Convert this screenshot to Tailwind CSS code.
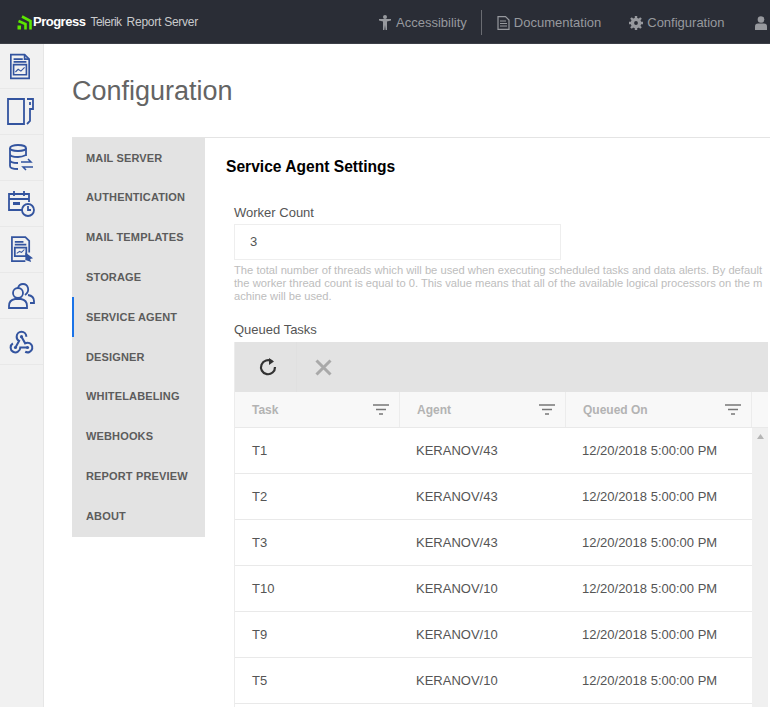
<!DOCTYPE html>
<html lang="en">
<head>
  <meta charset="UTF-8" />
  <title>Telerik Report Server - Configuration</title>
  <script src="https://cdn.jsdelivr.net/npm/@tailwindcss/browser@4"></script>
</head>
<body class="w-[770px] h-[707px] overflow-hidden bg-white font-['Liberation_Sans',Arial,sans-serif] text-[#5f5f5f]">

  <!-- top bar -->
  <header class="h-[44px] pt-[1px] bg-[#2a2d36] border-b border-[#3c3f47] flex items-center text-[#97999e] text-[13px] relative">
    <svg class="ml-[17px] w-[15px] h-[15px]" viewBox="0 0 15 15" fill="none" stroke="#5ce500" stroke-width="2.600"><path d="M5 1.500 13.500 6v8.500M1.500 6 8.500 9v5.500"/><path d="M.5 10.500h3.500v4H.5z" fill="#5ce500" stroke="none"/></svg>
    <span class="ml-[1px] text-white font-bold text-[13px] tracking-[-0.5px]">Progress</span>
    <span class="ml-[5px] text-[#c9cacc] text-[12px] tracking-[-0.5px]">Telerik</span>
    <span class="ml-[5px] text-[#c9cacc] text-[12px] tracking-[-0.25px]">Report Server</span>

    <nav class="absolute left-[379px] top-0 h-[45px] flex items-center whitespace-nowrap">
      <svg class="w-[12px] h-[15px]" viewBox="0 0 12 15" fill="#97999e"><circle cx="6" cy="2" r="2"/><path d="M0 4h12v1.500L8 6.500V15H6.600L6 10l-.6 5H4V6.500L0 5.500z"/></svg>
      <span class="ml-[5px]">Accessibility</span>
      <span class="ml-[14px] w-px h-[25px] bg-[#6a6c72]"></span>
      <svg class="ml-[15px] w-[13px] h-[14px]" viewBox="0 0 13 14" fill="none" stroke="#97999e" stroke-width="1.200"><path d="M1 .6h7.500L12 4v9.400H1zM3 5h6M3 7.500h7M3 10h7"/></svg>
      <span class="ml-[4px]">Documentation</span>
      <svg class="ml-[28px] w-[14px] h-[14px]" viewBox="0 0 14 14"><circle cx="7" cy="7" r="3.600" fill="none" stroke="#97999e" stroke-width="3.400"/><path stroke="#97999e" stroke-width="2.400" d="M7 0v3M7 11v3M0 7h3M11 7h3M2 2l2 2M10 10l2 2M12 2l-2 2M4 10l-2 2"/></svg>
      <span class="ml-[4px]">Configuration</span>
      <svg class="ml-[30px] w-[12px] h-[14px]" viewBox="0 0 12 14" fill="#97999e"><circle cx="6" cy="3.500" r="3.300"/><path d="M0 14v-3.500Q0 7.500 3 7.500h6q3 0 3 3V14z"/></svg>
    </nav>
  </header>

  <div class="flex h-[663px] overflow-hidden">
    <!-- icon rail -->
    <aside class="w-[44px] shrink-0 bg-[#f1f1f1] border-r border-[#e6e6e6]">
      <div class="h-[45px] border-b border-[#e8e8e8] flex items-center justify-center">
        <svg class="w-[22px] h-[27px] ml-[-3px]" viewBox="0 0 24 28" fill="none" stroke="#33549f" stroke-width="1.800"><path d="M2 1h15l5 5v21H2z"/><path d="M17 1v5h5M5 6h10M5 9h14"/><path d="M5 12h14v11H5z"/><path d="M7 20l3-3 3 2 4-4" stroke-width="1.200"/></svg>
      </div>
      <div class="h-[46px] border-b border-[#e8e8e8] flex items-center justify-center">
        <svg class="w-[28px] h-[27px] ml-[-1px]" viewBox="0 0 28 27" fill="none" stroke="#33549f" stroke-width="1.800"><path d="M1 1h16v25H1z"/><path d="M20 1h6v10h-3v12l-3 3"/><path d="M23 4v3" /></svg>
      </div>
      <div class="h-[46px] border-b border-[#e8e8e8] flex items-center justify-center">
        <svg class="w-[25px] h-[28px]" viewBox="0 0 25 28" fill="none" stroke="#33549f" stroke-width="1.800"><ellipse cx="9" cy="4" rx="8" ry="3"/><path d="M1 4v18c0 2 4 3 8 3M17 4v8M1 10c0 2 4 3 8 3s6-1 8-2M1 16c0 2 4 3 8 3"/><path d="M12 18h10l-3-3M24 23H14l3 3" stroke-width="1.500"/></svg>
      </div>
      <div class="h-[46px] border-b border-[#e8e8e8] flex items-center justify-center">
        <svg class="w-[27px] h-[27px]" viewBox="0 0 27 27" fill="none" stroke="#33549f" stroke-width="1.800"><path d="M14 20H1V4h20v8M1 9h20M6 1v5M16 1v5"/><path d="M5 12h7v3H5z" fill="#33549f" stroke="none"/><circle cx="20" cy="20" r="6"/><path d="M20 16v4h3"/></svg>
      </div>
      <div class="h-[46px] border-b border-[#e8e8e8] flex items-center justify-center">
        <svg class="w-[24px] h-[27px]" viewBox="0 0 25 28" fill="none" stroke="#33549f" stroke-width="1.800"><path d="M16 26H2V1h14l4 4v12"/><path d="M5 6h9M5 9h12"/><path d="M5 12h12v9H5z"/><path d="M7 18l3-2 2 1 3-3" stroke-width="1.100"/><path d="M16 17l8 6-3 1 1 3-6-2z" fill="#33549f" stroke="none"/></svg>
      </div>
      <div class="h-[46px] border-b border-[#e8e8e8] flex items-center justify-center">
        <svg class="w-[27px] h-[26px]" viewBox="0 0 27 26" fill="none" stroke="#33549f" stroke-width="1.800"><circle cx="10" cy="10" r="5"/><path d="M1 25v-2q0-6 6-7h6q6 1 6 7v2z"/><path d="M10 5q1-4 5-4t5 4-3 7"/><path d="M20 12q6 1 6 6v2h-4"/></svg>
      </div>
      <div class="h-[46px] border-b border-[#e8e8e8] flex items-center justify-center">
        <svg class="w-[29px] h-[29px]" viewBox="0 0 24 24" fill="none" stroke="#33549f" stroke-width="1.700"><path d="M4.876 13.610a4 4 0 1 0 6.124 3.390h6"/><path d="M15.066 20.502a4 4 0 1 0 1.934-7.502c-.706 0-1.424.179-2 .5l-3-5.500"/><path d="M16 8a4 4 0 1 0-8 0c0 1.506.77 2.818 2 3.500l-3 5.500"/><circle cx="12" cy="8" r="1.300" fill="#33549f" stroke="none"/><circle cx="7" cy="17" r="1.300" fill="#33549f" stroke="none"/><circle cx="17" cy="17" r="1.300" fill="#33549f" stroke="none"/></svg>
      </div>
    </aside>

    <main class="flex-1 min-w-0">
      <h1 class="ml-[28px] mt-[29px] h-[36px] text-[27px] leading-[36px] text-[#646464]">Configuration</h1>

      <div class="mt-[28px] ml-[28px] w-[726px] border-t border-[#e4e4e4] flex items-start">
        <!-- settings nav -->
        <nav class="w-[133px] h-[399px] shrink-0 bg-[#e3e3e3] text-[11px] font-bold text-[#5c5c5c] tracking-[0.15px]">
          <a class="flex items-center h-[39.800px] pl-[14px]">MAIL SERVER</a>
          <a class="flex items-center h-[39.800px] pl-[14px]">AUTHENTICATION</a>
          <a class="flex items-center h-[39.800px] pl-[14px]">MAIL TEMPLATES</a>
          <a class="flex items-center h-[39.800px] pl-[14px]">STORAGE</a>
          <a class="flex items-center h-[39.800px] pl-[12px] border-l-2 border-[#1a73e8]">SERVICE AGENT</a>
          <a class="flex items-center h-[39.800px] pl-[14px]">DESIGNER</a>
          <a class="flex items-center h-[39.800px] pl-[14px]">WHITELABELING</a>
          <a class="flex items-center h-[39.800px] pl-[14px]">WEBHOOKS</a>
          <a class="flex items-center h-[39.800px] pl-[14px]">REPORT PREVIEW</a>
          <a class="flex items-center h-[39.800px] pl-[14px]">ABOUT</a>
        </nav>

        <section class="pl-[21px] flex-1 min-w-0">
          <h2 class="mt-[19px] h-[20px] text-[15.600px] leading-5 font-bold text-black">Service Agent Settings</h2>

          <div class="ml-[8px]">
            <label class="block mt-[27px] h-[18px] text-[13px] leading-[18px] text-[#555]">Worker Count</label>
            <div class="mt-[2px] w-[327px] h-[36px] border border-[#eeeeee] flex items-center pl-[15px] text-[13px] text-[#555]">3</div>
            <p class="mt-[4px] h-[39px] text-[11.200px] leading-[13px] text-[#bdbdbd] whitespace-nowrap">The total number of threads which will be used when executing scheduled tasks and data alerts. By default<br>the worker thread count is equal to 0. This value means that all of the available logical processors on the m<br>achine will be used.</p>
            <label class="block mt-[18px] h-[18px] text-[13px] leading-[18px] text-[#555]">Queued Tasks</label>

            <!-- grid -->
            <div class="mt-[3px] w-[534px] border-l border-[#ececec]">
              <div class="h-[50px] bg-[#e3e3e3] flex items-center">
                <div class="w-[61px] pl-[5px] h-full flex items-center justify-center">
                  <svg class="w-[20px] h-[20px]" viewBox="0 0 20 20" fill="none" stroke="#333" stroke-width="2.200"><path d="M14 4.500A7 7 0 1 0 17 10"/><path d="M11 1l5 3.500-5 3.500z" fill="#333" stroke="none"/></svg>
                </div>
                <div class="w-px h-full bg-[#e0e0e0]"></div>
                <div class="ml-[18px]">
                  <svg class="w-[17px] h-[17px]" viewBox="0 0 17 17" stroke="#a9a9a9" stroke-width="3"><path d="M1.500 1.500l14 14M15.500 1.500l-14 14"/></svg>
                </div>
              </div>

              <div class="grid grid-cols-[165px_166px_186px_17px] h-[36px] bg-[#f8f8f8] border-b border-[#e9e9e9] text-[12px] font-bold text-[#b3b3b3]">
                <div class="flex items-center justify-between pl-[17px] pr-[10px] border-r border-[#ececec]">Task
                  <svg class="w-[16px] h-[11px]" viewBox="0 0 16 11" stroke="#777" stroke-width="1.500"><path d="M0 1h16M3 5.500h10M6 10h4"/></svg>
                </div>
                <div class="flex items-center justify-between pl-[17px] pr-[10px] border-r border-[#ececec]">Agent
                  <svg class="w-[16px] h-[11px]" viewBox="0 0 16 11" stroke="#777" stroke-width="1.500"><path d="M0 1h16M3 5.500h10M6 10h4"/></svg>
                </div>
                <div class="flex items-center justify-between pl-[17px] pr-[10px] border-r border-[#ececec]">Queued On
                  <svg class="w-[16px] h-[11px]" viewBox="0 0 16 11" stroke="#777" stroke-width="1.500"><path d="M0 1h16M3 5.500h10M6 10h4"/></svg>
                </div>
                <div></div>
              </div>

              <div class="flex">
                <div class="w-[517px] text-[13px] text-[#555]">
                  <div class="grid grid-cols-[165px_166px_186px] h-[46px] items-center border-b border-[#e9e9e9]"><span class="pl-[17px]">T1</span><span class="pl-[16px]">KERANOV/43</span><span class="pl-[16px]">12/20/2018 5:00:00 PM</span></div>
                  <div class="grid grid-cols-[165px_166px_186px] h-[46px] items-center border-b border-[#e9e9e9]"><span class="pl-[17px]">T2</span><span class="pl-[16px]">KERANOV/43</span><span class="pl-[16px]">12/20/2018 5:00:00 PM</span></div>
                  <div class="grid grid-cols-[165px_166px_186px] h-[46px] items-center border-b border-[#e9e9e9]"><span class="pl-[17px]">T3</span><span class="pl-[16px]">KERANOV/43</span><span class="pl-[16px]">12/20/2018 5:00:00 PM</span></div>
                  <div class="grid grid-cols-[165px_166px_186px] h-[46px] items-center border-b border-[#e9e9e9]"><span class="pl-[17px]">T10</span><span class="pl-[16px]">KERANOV/10</span><span class="pl-[16px]">12/20/2018 5:00:00 PM</span></div>
                  <div class="grid grid-cols-[165px_166px_186px] h-[46px] items-center border-b border-[#e9e9e9]"><span class="pl-[17px]">T9</span><span class="pl-[16px]">KERANOV/10</span><span class="pl-[16px]">12/20/2018 5:00:00 PM</span></div>
                  <div class="grid grid-cols-[165px_166px_186px] h-[46px] items-center border-b border-[#e9e9e9]"><span class="pl-[17px]">T5</span><span class="pl-[16px]">KERANOV/10</span><span class="pl-[16px]">12/20/2018 5:00:00 PM</span></div>
                  <div class="h-[3px]"></div>
                </div>
                <div class="w-[17px] bg-[#f0f0f0] flex justify-center pt-[6px]">
                  <svg class="w-[7px] h-[5px]" viewBox="0 0 7 5" fill="#b5b5b5"><path d="M3.500 0 7 5H0z"/></svg>
                </div>
              </div>
            </div>
          </div>
        </section>
      </div>
    </main>
  </div>
</body>
</html>
